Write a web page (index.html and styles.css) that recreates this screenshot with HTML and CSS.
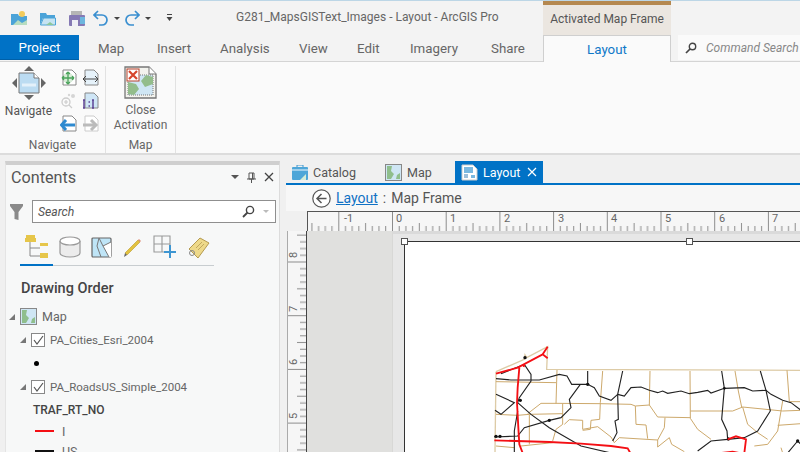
FILE: index.html
```html
<!DOCTYPE html>
<html lang="en">
<head>
<meta charset="utf-8">
<title>G281_MapsGISText_Images - Layout - ArcGIS Pro</title>
<link rel="stylesheet" href="styles.css">
</head>
<body>
<div class="app">
  <header class="header">
    <div class="title-row">
      <div class="qat">
        <svg class="qi q1" width="18" height="16" viewBox="0 0 18 16"><path d="M1 4h7l1 2h8v9H1z" fill="#4ba3d8"/><path d="M3 15l5-5 4 3 5-3v5z" fill="#b6dcc0"/><circle cx="12" cy="4" r="3" fill="#f2cb5c"/></svg>
        <svg class="qi q2" width="18" height="16" viewBox="0 0 18 16"><path d="M1 3h6l1 2h8v3H4l-3 7z" fill="#4ba3d8"/><path d="M1.500 15l3-7h12v7z" fill="#c5e3f2" stroke="#4ba3d8"/><path d="M7 15l4-3 4 3z" fill="#8cc79a"/></svg>
        <svg class="qi q3" width="18" height="17" viewBox="0 0 18 17"><rect x="3" y="1" width="11" height="4" fill="#b5b5b5"/><rect x="1" y="5" width="16" height="11" rx="1" fill="#8579b4"/><rect x="4" y="10" width="6" height="6" fill="#efeff6"/><rect x="12" y="7" width="5" height="7" fill="#6db6de"/></svg>
        <svg class="qi q4" width="16" height="16" viewBox="0 0 16 16"><path d="M5 1L1 5l4 4M1 5h8a5 5 0 0 1 0 10H6" fill="none" stroke="#3a8fd0" stroke-width="1.700"/></svg>
        <span class="caret c1"></span>
        <svg class="qi q5" width="16" height="16" viewBox="0 0 16 16"><path d="M11 1l4 4-4 4M15 5H7a5 5 0 0 0 0 10h3" fill="none" stroke="#3a8fd0" stroke-width="1.700"/></svg>
        <span class="caret c2"></span>
        <svg class="qi q6" width="7" height="8" viewBox="0 0 7 8"><path d="M1 .5h5" stroke="#444"/><path d="M.5 3h6L3.500 7z" fill="#444"/></svg>
      </div>
      <div class="app-title">G281_MapsGISText_Images - Layout - ArcGIS Pro</div>
      <div class="context-tab">Activated Map Frame</div>
    </div>
    <nav class="tab-row">
      <div class="tab-project">Project</div>
      <div class="tab t-map">Map</div>
      <div class="tab t-insert">Insert</div>
      <div class="tab t-analysis">Analysis</div>
      <div class="tab t-view">View</div>
      <div class="tab t-edit">Edit</div>
      <div class="tab t-imagery">Imagery</div>
      <div class="tab t-share">Share</div>
      <div class="tab-layout">Layout</div>
      <div class="command-search">
        <svg width="12" height="12" viewBox="0 0 12 12"><circle cx="7.500" cy="4.500" r="3.200" fill="none" stroke="#444" stroke-width="1.400"/><path d="M5 7l-4 4" stroke="#444" stroke-width="1.700"/></svg>
        <span>Command Search</span>
      </div>
    </nav>
  </header>

  <section class="ribbon">
    <div class="group group-nav">
      <div class="group-body nav-body">
        <div class="big-button">
          <svg width="36" height="34" viewBox="0 0 36 34"><path d="M18 0l5 5H13zM18 34l-5-5h10zM1 17l5-5v10zM35 17l-5-5v10z" fill="#666"/><path d="M8 7h15l5 5v15H8z" fill="#bcdcf2" stroke="#777"/><path d="M23 7v5h5" fill="#fff" stroke="#777"/><path d="M11 19h14" stroke="#e4f1fa" stroke-width="3"/></svg>
          <span class="nav-label">Navigate</span>
        </div>
        <div class="small-grid">
          <svg width="17" height="17" viewBox="0 0 17 17"><path d="M3 1h9l4 4v11H3z" fill="#fff" stroke="#888"/><rect x="4" y="5" width="8" height="8" fill="#d8ecd8"/><path d="M8 3v12M2 9h12M8 3L6 5M8 3l2 2M8 15l-2-2M8 15l2-2M2 9l2-2M2 9l2 2M14 9l-2-2M14 9l-2 2" fill="none" stroke="#4aa35a" stroke-width="1.300"/></svg>
          <svg width="17" height="17" viewBox="0 0 17 17"><path d="M3 1h9l4 4v11H3z" fill="#e6f2fa" stroke="#888"/><path d="M1 10h15M1 10l3-3M1 10l3 3M16 10l-3-3M16 10l-3 3" stroke="#444" fill="none"/></svg>
          <svg width="17" height="17" viewBox="0 0 17 17"><circle cx="6" cy="10" r="4" fill="none" stroke="#ccc" stroke-width="1.300"/><path d="M9 13l3 3M4 10h4M6 8v4" stroke="#ccc" stroke-width="1.200"/><circle cx="13" cy="4" r="2" fill="#d5d5d5"/><circle cx="9" cy="3" r="1.200" fill="#d5d5d5"/></svg>
          <svg width="17" height="17" viewBox="0 0 17 17"><path d="M3 1h9l4 4v11H3z" fill="#cfe6f6" stroke="#888"/><path d="M2 8v8M1 8h2M11 8v8M10 8h2M1 16h2M10 16h2" stroke="#5f4597" stroke-width="1.500" fill="none"/><path d="M6.500 10h1.500M6.500 14h1.500" stroke="#5f4597" stroke-width="1.600"/></svg>
          <svg width="17" height="17" viewBox="0 0 17 17"><path d="M3 1h9l4 4v11H3z" fill="#fff" stroke="#888"/><path d="M2 10h13" stroke="#2e8ad0" stroke-width="3"/><path d="M6 5l-4.500 5 4.500 5" fill="none" stroke="#2e8ad0" stroke-width="3"/></svg>
          <svg width="17" height="17" viewBox="0 0 17 17"><path d="M3 1h9l4 4v11H3z" fill="#fff" stroke="#ccc"/><path d="M1 10h12" stroke="#bbb" stroke-width="3"/><path d="M9 5l5 5-5 5" fill="none" stroke="#bbb" stroke-width="3"/></svg>
        </div>
      </div>
      <div class="group-label">Navigate</div>
    </div>
    <div class="group group-map">
      <div class="group-body map-body">
        <svg width="33" height="33" viewBox="0 0 33 33"><path d="M1 1h24l7 7v24H1z" fill="#f3f3ee" stroke="#777" stroke-width="1.300"/><path d="M25 1v7h7" fill="#fff" stroke="#777"/><path d="M4 9h25v20H4z" fill="#cfe6f4" stroke="#777" stroke-dasharray="1 1"/><path d="M4 28V16l8 2 3 5-5 6zM29 11v7l-8 3-4-6 5-6z" fill="#93bd8b"/><rect x="3" y="3" width="12" height="12" fill="#fff" stroke="#b8402a"/><path d="M5 5l8 8M13 5l-8 8" stroke="#d6452c" stroke-width="2.200"/></svg>
        <span class="close-label">Close<br>Activation</span>
      </div>
      <div class="group-label">Map</div>
    </div>
  </section>

  <main class="work">
    <aside class="contents">
      <div class="pane-head">
        <span class="pane-title">Contents</span>
        <span class="caret pane-caret"></span>
        <svg class="pin" width="9" height="11" viewBox="0 0 9 11"><path d="M2 1h5v6H2zM0 7h9M4.500 7v4M5.500 1v6" fill="none" stroke="#555"/></svg>
        <svg class="close-x" width="10" height="10" viewBox="0 0 10 10"><path d="M1 1l8 8M9 1l-8 8" stroke="#444" stroke-width="1.300"/></svg>
      </div>
      <div class="search-row">
        <svg width="15" height="18" viewBox="0 0 15 18"><path d="M1 1h13v2L9.500 9v8l-4-1V9L1 3z" fill="#8a8a8a"/></svg>
        <div class="search-box">
          <span>Search</span>
          <svg class="s-glass" width="13" height="13" viewBox="0 0 13 13"><circle cx="8" cy="5" r="3.600" fill="none" stroke="#444" stroke-width="1.400"/><path d="M5.500 7.500L1 12" stroke="#444" stroke-width="1.800"/></svg>
          <span class="caret s-caret"></span>
        </div>
      </div>
      <div class="view-tabs">
        <svg width="24" height="24" viewBox="0 0 24 24"><path d="M5 6v15h10M5 13h10" fill="none" stroke="#888"/><path d="M1 0h9v3h-9zM0 3h11v4H0z" fill="#e6c64a"/><path d="M15 8h8v3h-8zM15 18h8v5h-8z" fill="#e6c64a"/></svg>
        <svg width="22" height="22" viewBox="0 0 22 22"><path d="M1 5v12c0 2 4 4 10 4s10-2 10-4V5" fill="#ececec" stroke="#999" stroke-width="1.200"/><ellipse cx="11" cy="5" rx="10" ry="4" fill="#fff" stroke="#999" stroke-width="1.200"/></svg>
        <svg width="21" height="21" viewBox="0 0 21 21"><rect x="1" y="1" width="19" height="19" rx="1" fill="#bfe5f7" stroke="#666" stroke-width="1.200"/><path d="M12 9l8-4v15h-2z" fill="#fff"/><path d="M8 1l4 8 6 11M12 9l8-4M8 1L6 9l4 11" fill="none" stroke="#777"/></svg>
        <svg width="21" height="21" viewBox="0 0 21 21"><path d="M3 16L16 3l2 2L5 18z" fill="#e3c23f" stroke="#b89a2a" stroke-width=".6"/><path d="M16 3l1-1 2 2-1 1z" fill="#e08f7a"/><path d="M3 16l-1 4 3-2z" fill="#666"/></svg>
        <svg width="24" height="24" viewBox="0 0 24 24"><path d="M1 1h16v16H1zM1 9h16M9 1v16" fill="none" stroke="#999" stroke-width="1.100"/><path d="M17 10v13M11 17h12" stroke="#3d96d2" stroke-width="2"/></svg>
        <svg width="23" height="23" viewBox="0 0 23 23"><path d="M2 13L13 2l9 5-11 15z" fill="#eed98a" stroke="#b49a50"/><circle cx="5" cy="17" r="2.500" fill="none" stroke="#888"/><path d="M9 12l6-6M11 14l6-6" stroke="#c1a85f"/></svg>
      </div>
      <div class="view-rule"><span></span></div>
      <h2 class="drawing-order">Drawing Order</h2>
      <ul class="tree">
        <li class="row row-map">
          <span class="twist"></span>
          <svg width="17" height="17" viewBox="0 0 17 17"><rect x=".5" y=".5" width="16" height="16" fill="#cfe6f4" stroke="#888"/><path d="M2 2h5l-1 5 3 3-3 5H2zM15 9v6h-4l1-4z" fill="#8fbe8c"/></svg>
          <span>Map</span>
        </li>
        <li class="row row-layer">
          <span class="twist"></span>
          <span class="check"><svg width="11" height="10" viewBox="0 0 11 10"><path d="M1 5l3 4 6-8" fill="none" stroke="#555" stroke-width="1.200"/></svg></span>
          <span>PA_Cities_Esri_2004</span>
        </li>
        <li class="row row-symbol"><span class="dot"></span></li>
        <li class="row row-layer">
          <span class="twist"></span>
          <span class="check"><svg width="11" height="10" viewBox="0 0 11 10"><path d="M1 5l3 4 6-8" fill="none" stroke="#555" stroke-width="1.200"/></svg></span>
          <span>PA_RoadsUS_Simple_2004</span>
        </li>
        <li class="row row-field">TRAF_RT_NO</li>
        <li class="row row-class"><span class="swatch red"></span><span>I</span></li>
        <li class="row row-class"><span class="swatch black"></span><span>US</span></li>
      </ul>
    </aside>

    <section class="viewer">
      <div class="doc-tabs">
        <div class="doc-tab dt-catalog">
          <svg width="16" height="15" viewBox="0 0 16 15"><path d="M5 2V0h6v2" fill="none" stroke="#3a96cf"/><rect y="2" width="16" height="13" rx="1" fill="#4ea6d8"/><path d="M0 5h16" stroke="#d6ecf8" stroke-width="1.200"/><path d="M8 15l6-6v6z" fill="#d4ecd8"/></svg>
          <span>Catalog</span>
        </div>
        <div class="doc-tab dt-map">
          <svg width="17" height="17" viewBox="0 0 17 17"><rect x=".5" y=".5" width="16" height="16" fill="#cfe6f4" stroke="#888"/><path d="M2 2h5l-1 5 3 3-3 5H2zM15 9v6h-4l1-4z" fill="#8fbe8c"/></svg>
          <span>Map</span>
        </div>
        <div class="doc-tab dt-layout">
          <svg width="17" height="17" viewBox="0 0 17 17"><path d="M1 1h11l4 4v11H1z" fill="#fff" stroke="#ccc"/><path d="M3 3h9v6H3z" fill="#7ab8e0"/><path d="M3 11h4M3 13h4" stroke="#3a7fb5"/><path d="M10 11h4v3h-4z" fill="#7ab8e0"/></svg>
          <span>Layout</span>
          <svg class="dt-close" width="10" height="10" viewBox="0 0 10 10"><path d="M1 1l8 8M9 1l-8 8" stroke="#fff" stroke-width="1.200"/></svg>
        </div>
      </div>
      <div class="breadcrumb">
        <svg width="19" height="19" viewBox="0 0 19 19"><circle cx="9.500" cy="9.500" r="8.700" fill="#fff" stroke="#555" stroke-width="1.200"/><path d="M14.500 9.500h-9M9.500 5l-4.500 4.500 4.500 4.500" fill="none" stroke="#555" stroke-width="1.500"/></svg>
        <a class="crumb-link">Layout</a>
        <span class="crumb-sep">:</span>
        <span>Map Frame</span>
      </div>
      <div class="ruler-top">
        <svg width="493" height="20" viewBox="0 0 493 20">
          <defs>
            <pattern id="tickh" x="31.300" y="0" width="53.700" height="20" patternUnits="userSpaceOnUse">
              <path d="M.5 0v20M7.200 15v5M13.900 15v5M20.600 15v5M34 15v5M40.700 15v5M47.400 15v5" stroke="#8c8c8c" fill="none"/>
              <path d="M27.300 12v8" stroke="#8c8c8c"/>
            </pattern>
          </defs>
          <rect width="493" height="20" fill="#f6f6f6"/>
          <rect y="1" width="493" height="19" fill="url(#tickh)"/>
          <path d="M0 .5h493M.5 0v20" stroke="#555" fill="none"/>
          <g class="ruler-num">
            <text x="37" y="11">-1</text><text x="89" y="11">0</text><text x="143" y="11">1</text><text x="197" y="11">2</text><text x="251" y="11">3</text><text x="304" y="11">4</text><text x="358" y="11">5</text><text x="412" y="11">6</text><text x="465" y="11">7</text>
          </g>
        </svg>
      </div>
      <div class="stage">
        <div class="ruler-left">
          <svg width="20" height="222" viewBox="0 0 20 222">
            <defs>
              <pattern id="tickv" x="0" y="30.500" width="20" height="53.700" patternUnits="userSpaceOnUse">
                <path d="M0 .5h20M13 7.200h7M13 13.900h7M13 20.600h7M13 34h7M13 40.700h7M13 47.400h7" stroke="#8c8c8c" fill="none"/>
                <path d="M10 27.300h10" stroke="#8c8c8c"/>
              </pattern>
            </defs>
            <rect width="20" height="222" fill="#f6f6f6"/>
            <rect width="20" height="222" fill="url(#tickv)"/>
            <path d="M19.500 0v222" stroke="#444"/>
            <path d="M.5 0v222" stroke="#aaa"/>
            <g class="ruler-num">
              <text transform="translate(10 27) rotate(-90)">8</text><text transform="translate(10 81) rotate(-90)">7</text><text transform="translate(10 134) rotate(-90)">6</text><text transform="translate(10 188) rotate(-90)">5</text>
            </g>
          </svg>
        </div>
        <div class="canvas-gray">
          <div class="page-surround">
            <div class="page">
              <span class="handle h-left"></span>
              <span class="handle h-mid"></span>
              <svg class="map" width="320" height="122" viewBox="0 0 960 366">
                <g fill="none" stroke="#ddcba6" stroke-width="4"><path d="M45 122L130 85 132 72 137 80 200 47 197 115 960 118"/><path d="M45 122L42 366"/></g>
                <g fill="none" stroke="#cda96c" stroke-width="3">
                  <path d="M45 152L225 155M228 117L225 218M365 120L358 215 356 265 330 268 328 295 305 298M507 120L505 222M627 120L628 262M762 120L772 180 782 228M918 118L925 212H960"/>
                  <path d="M140 248L180 217H225L357 218 450 220 463 225 505 222 530 258 628 260"/>
                  <path d="M628 240L755 240 785 228 905 240 960 238"/>
                  <path d="M45 250L110 253 145 250 245 248M145 250V340M245 218V280L225 295 215 330"/>
                  <path d="M250 280L265 266 305 268V295L350 287 390 318 400 335 415 320 530 327 550 290 552 260"/>
                  <path d="M463 225L465 280 495 282 500 323M530 327V348L565 320 572 340 610 362"/>
                  <path d="M628 262L650 295 690 325M785 228L800 280 830 305 860 325M905 210L890 300 860 340 820 345M890 283L960 278M45 345L100 350M120 345L215 335M900 350L905 366"/>
                </g>
                <g fill="none" stroke="#222" stroke-width="3.400">
                  <path d="M60 128L130 100 150 130V150L115 200 110 215 150 250 205 290 300 345 390 366"/>
                  <path d="M45 143L90 147H175L235 130 258 135 272 160H320L340 170 355 195 390 208 410 190"/>
                  <path d="M320 120V160M425 120L410 190 412 265 402 270 408 305 395 330"/>
                  <path d="M410 190L430 195 450 170 480 168 505 178 530 185 545 180 560 187 600 180 625 188 650 184 680 178 690 186 730 172 790 170 815 180 855 178 870 190 905 208 930 215 960 238"/>
                  <path d="M722 120L730 172 722 265 738 300 740 325M838 120L855 178 868 240 830 300 790 320 740 325 690 330 650 360"/>
                  <path d="M298 160L265 205 270 230 240 260 205 268 130 290 110 315 40 318"/>
                  <path d="M45 190L100 215 60 250 42 238M110 240L100 300V366M920 366L950 330 960 340"/>
                </g>
                <g fill="#111"><circle cx="132" cy="80" r="5"/><circle cx="118" cy="208" r="5"/><circle cx="320" cy="160" r="5"/><circle cx="205" cy="268" r="5"/><circle cx="57" cy="316" r="5"/><circle cx="45" cy="316" r="5"/><circle cx="730" cy="172" r="4"/><circle cx="742" cy="324" r="5"/><circle cx="950" cy="330" r="5"/></g>
                <g fill="none" stroke="#f40f14" stroke-width="5.500">
                  <path d="M45 128L110 110 185 70 200 82M185 70L200 47M130 100L128 108M115 110L110 170 108 215 112 290 115 340 125 366"/>
                  <path d="M40 328L205 333 300 338 390 345 440 352 448 366"/>
                  <path d="M740 325L765 316 795 325 790 366M720 366L755 362 775 366"/>
                </g>
              </svg>
            </div>
          </div>
        </div>
      </div>
    </section>
  </main>
</div>
</body>
</html>
```
FILE: styles.css
```css
* { box-sizing: border-box; }
html, body { margin: 0; padding: 0; }
body { font-family: Roboto, "Open Sans", sans-serif; color: #555; background: #f0f0f0; }
svg { display: block; flex: none; }

.app { width: 800px; height: 452px; overflow: hidden; display: flex; flex-direction: column; }

/* Header */
.header { background: #f3f3f3; border-top: 1px solid #bcd6e6; flex: none; }
.title-row { height: 34px; display: flex; align-items: center; }
.qat { width: 236px; flex: none; display: flex; align-items: center; padding-left: 10px; }
.qi { margin-right: 0; }
.q2, .q3 { margin-left: 11px; }
.q4 { margin-left: 7px; }
.q5 { margin-left: 4px; }
.q6 { margin-left: 15px; }
.caret { display: block; width: 0; height: 0; border-left: 3px solid transparent; border-right: 3px solid transparent; border-top: 3px solid #444; flex: none; }
.c1, .c2 { margin-left: 5px; }
.app-title { width: 307px; flex: none; font-size: 12px; color: #666; white-space: nowrap; padding-bottom: 2px; }
.context-tab { width: 128px; height: 34px; flex: none; background: #ebe6e0; border-top: 4px solid #b5884f; font-size: 12px; color: #555; text-align: center; line-height: 28px; white-space: nowrap; }

.tab-row { height: 27px; display: flex; border-bottom: 1px solid #d4d4d4; font-size: 13.300px; }
.tab-project { width: 79px; height: 25px; background: #0072c6; color: #fff; text-align: center; line-height: 26px; border-bottom: 1px solid #0060a8; }
.tab { color: #666; line-height: 28px; white-space: nowrap; }
.t-map { margin-left: 19px; width: 59px; }
.t-insert { width: 63px; }
.t-analysis { width: 79px; }
.t-view { width: 58px; }
.t-edit { width: 53px; }
.t-imagery { width: 81px; }
.t-share { width: 52px; }
.tab-layout { width: 128px; height: 27px; background: #fafafa; border: 1px solid #cfcfcf; border-bottom: 0; text-align: center; color: #0f78c8; line-height: 27px; }
.command-search { margin-left: 7px; flex: 1; height: 25px; background: #fafafa; display: flex; align-items: center; gap: 9px; padding-left: 7px; font-size: 12px; font-style: italic; color: #888; white-space: nowrap; }

/* Ribbon */
.ribbon { height: 93px; flex: none; display: flex; background: #fafafa; border-bottom: 2px solid #dcdcdc; padding-top: 4px; }
.group { display: flex; flex-direction: column; align-items: center; border-right: 1px solid #e2e2e2; height: 87px; }
.group-nav { width: 106px; }
.group-map { width: 70px; }
.group-body { flex: 1; }
.group-label { font-size: 12px; line-height: 16px; color: #666; }
.nav-body { display: flex; width: 100%; }
.big-button { width: 57px; display: flex; flex-direction: column; align-items: center; font-size: 12px; color: #555; }
.nav-label { margin-top: 3px; line-height: 16px; }
.small-grid { display: grid; grid-template-columns: 17px 17px; grid-auto-rows: 17px; column-gap: 5px; row-gap: 6px; padding-top: 3px; margin-left: 3px; }
.map-body { display: flex; flex-direction: column; align-items: center; }
.close-label { margin-top: 4px; font-size: 12px; line-height: 15px; text-align: center; color: #666; }

/* Work area */
.work { flex: 1; display: flex; min-height: 0; background: #f0f0f0; padding-top: 6px; }
.contents { width: 275px; margin-left: 5px; flex: none; background: #f7f8f8; border-top: 4px solid #cfcfcf; border-right: 1px solid #dcdcdc; border-left: 1px solid #e4e4e4; overflow: hidden; }
.pane-head { height: 24px; display: flex; align-items: center; padding-left: 5px; }
.pane-title { font-size: 16.200px; color: #555; flex: 1; }
.pane-caret { border-left-width: 4px; border-right-width: 4px; border-top-width: 4px; margin-right: 8px; border-top-color: #555; }
.pin { margin-right: 8px; }
.close-x { margin-right: 5px; }
.search-row { display: flex; align-items: center; gap: 8px; margin-top: 11px; padding-left: 3px; }
.search-box { width: 244px; height: 23px; background: #fff; border: 1px solid #8f8f8f; display: flex; align-items: center; padding-left: 5px; font-size: 12.200px; font-style: italic; color: #555; }
.search-box > span:first-child { flex: 1; }
.s-glass { margin-right: 8px; }
.s-caret { margin-right: 6px; border-top-color: #bbb; }
.view-tabs { display: flex; align-items: center; gap: 10px; height: 32px; margin-top: 8px; padding-left: 19px; }
.view-rule { width: 194px; height: 2px; margin-left: 14px; margin-top: 1px; border-bottom: 1px solid #c8cdd0; }
.view-rule span { display: block; width: 33px; height: 2px; background: #0072c6; }
.drawing-order { margin: 13px 0 0 15px; font-size: 14.500px; line-height: 20px; font-weight: 500; color: #444; }
.tree { list-style: none; margin: 8px 0 0; padding: 0; }
.row { display: flex; align-items: center; font-size: 11.500px; color: #666; white-space: nowrap; }
.twist { width: 0; height: 0; border-bottom: 6px solid #777; border-left: 6px solid transparent; flex: none; }
.row-map { height: 19px; padding-left: 3px; gap: 5px; font-size: 12.500px; }
.row-layer { height: 24px; padding-left: 14px; gap: 5px; margin-top: 2px; }
.row-layer:nth-child(4) { margin-top: 1px; }
.check { width: 14px; height: 14px; border: 1px solid #888; background: #fff; display: flex; align-items: center; justify-content: center; flex: none; }
.row-symbol { height: 22px; padding-left: 28px; }
.dot { width: 5px; height: 5px; border-radius: 50%; background: #000; }
.row-field { height: 22px; padding-left: 27px; font-weight: 500; font-size: 12px; color: #444; }
.row-class { height: 20px; padding-left: 29px; gap: 8px; color: #666; font-size: 12.500px; }
.swatch { width: 19px; height: 2px; }
.red { background: #f40f14; }
.black { background: #111; }

/* Viewer */
.viewer { flex: 1; min-width: 0; margin-left: 6px; display: flex; flex-direction: column; }
.doc-tabs { height: 24px; flex: none; display: flex; border-bottom: 2px solid #0072c6; font-size: 12.500px; color: #555; }
.doc-tab { display: flex; align-items: center; gap: 5px; height: 22px; }
.dt-catalog { margin-left: 6px; width: 93px; }
.dt-map { width: 70px; }
.dt-layout { width: 88px; background: #0072c6; color: #fff; padding: 0 6px; }
.dt-close { margin-left: auto; }
.breadcrumb { height: 26px; flex: none; background: #f7f7f7; display: flex; align-items: center; padding-left: 26px; font-size: 14px; color: #555; }
.crumb-link { margin-left: 5px; color: #1071c4; text-decoration: underline; }
.crumb-sep { margin: 0 5px; }
.ruler-top { height: 20px; flex: none; margin-left: 21px; }
.ruler-num text { font-family: Roboto, sans-serif; font-size: 11px; fill: #666; }
.stage { flex: 1; min-height: 0; display: flex; background: #f0f0f0; padding-left: 1px; }
.ruler-left { width: 20px; flex: none; }
.canvas-gray { flex: 1; min-width: 0; background: #e0e0de; padding-left: 85px; display: flex; }
.page-surround { flex: 1; min-width: 0; background: #e7e7e7; border-top: 3px solid #dadada; padding: 7px 0 0 11px; border-left: 1px solid #d8d8d6; display: flex; }
.page { flex: 1; min-width: 0; background: #fff; border-top: 1px solid #333; border-left: 1px solid #333; position: relative; }
.handle { position: absolute; top: -4px; width: 7px; height: 7px; background: #fff; border: 1px solid #555; }
.h-left { left: -4px; }
.h-mid { left: 281px; }
.map { position: absolute; left: 76px; top: 89px; }
```
